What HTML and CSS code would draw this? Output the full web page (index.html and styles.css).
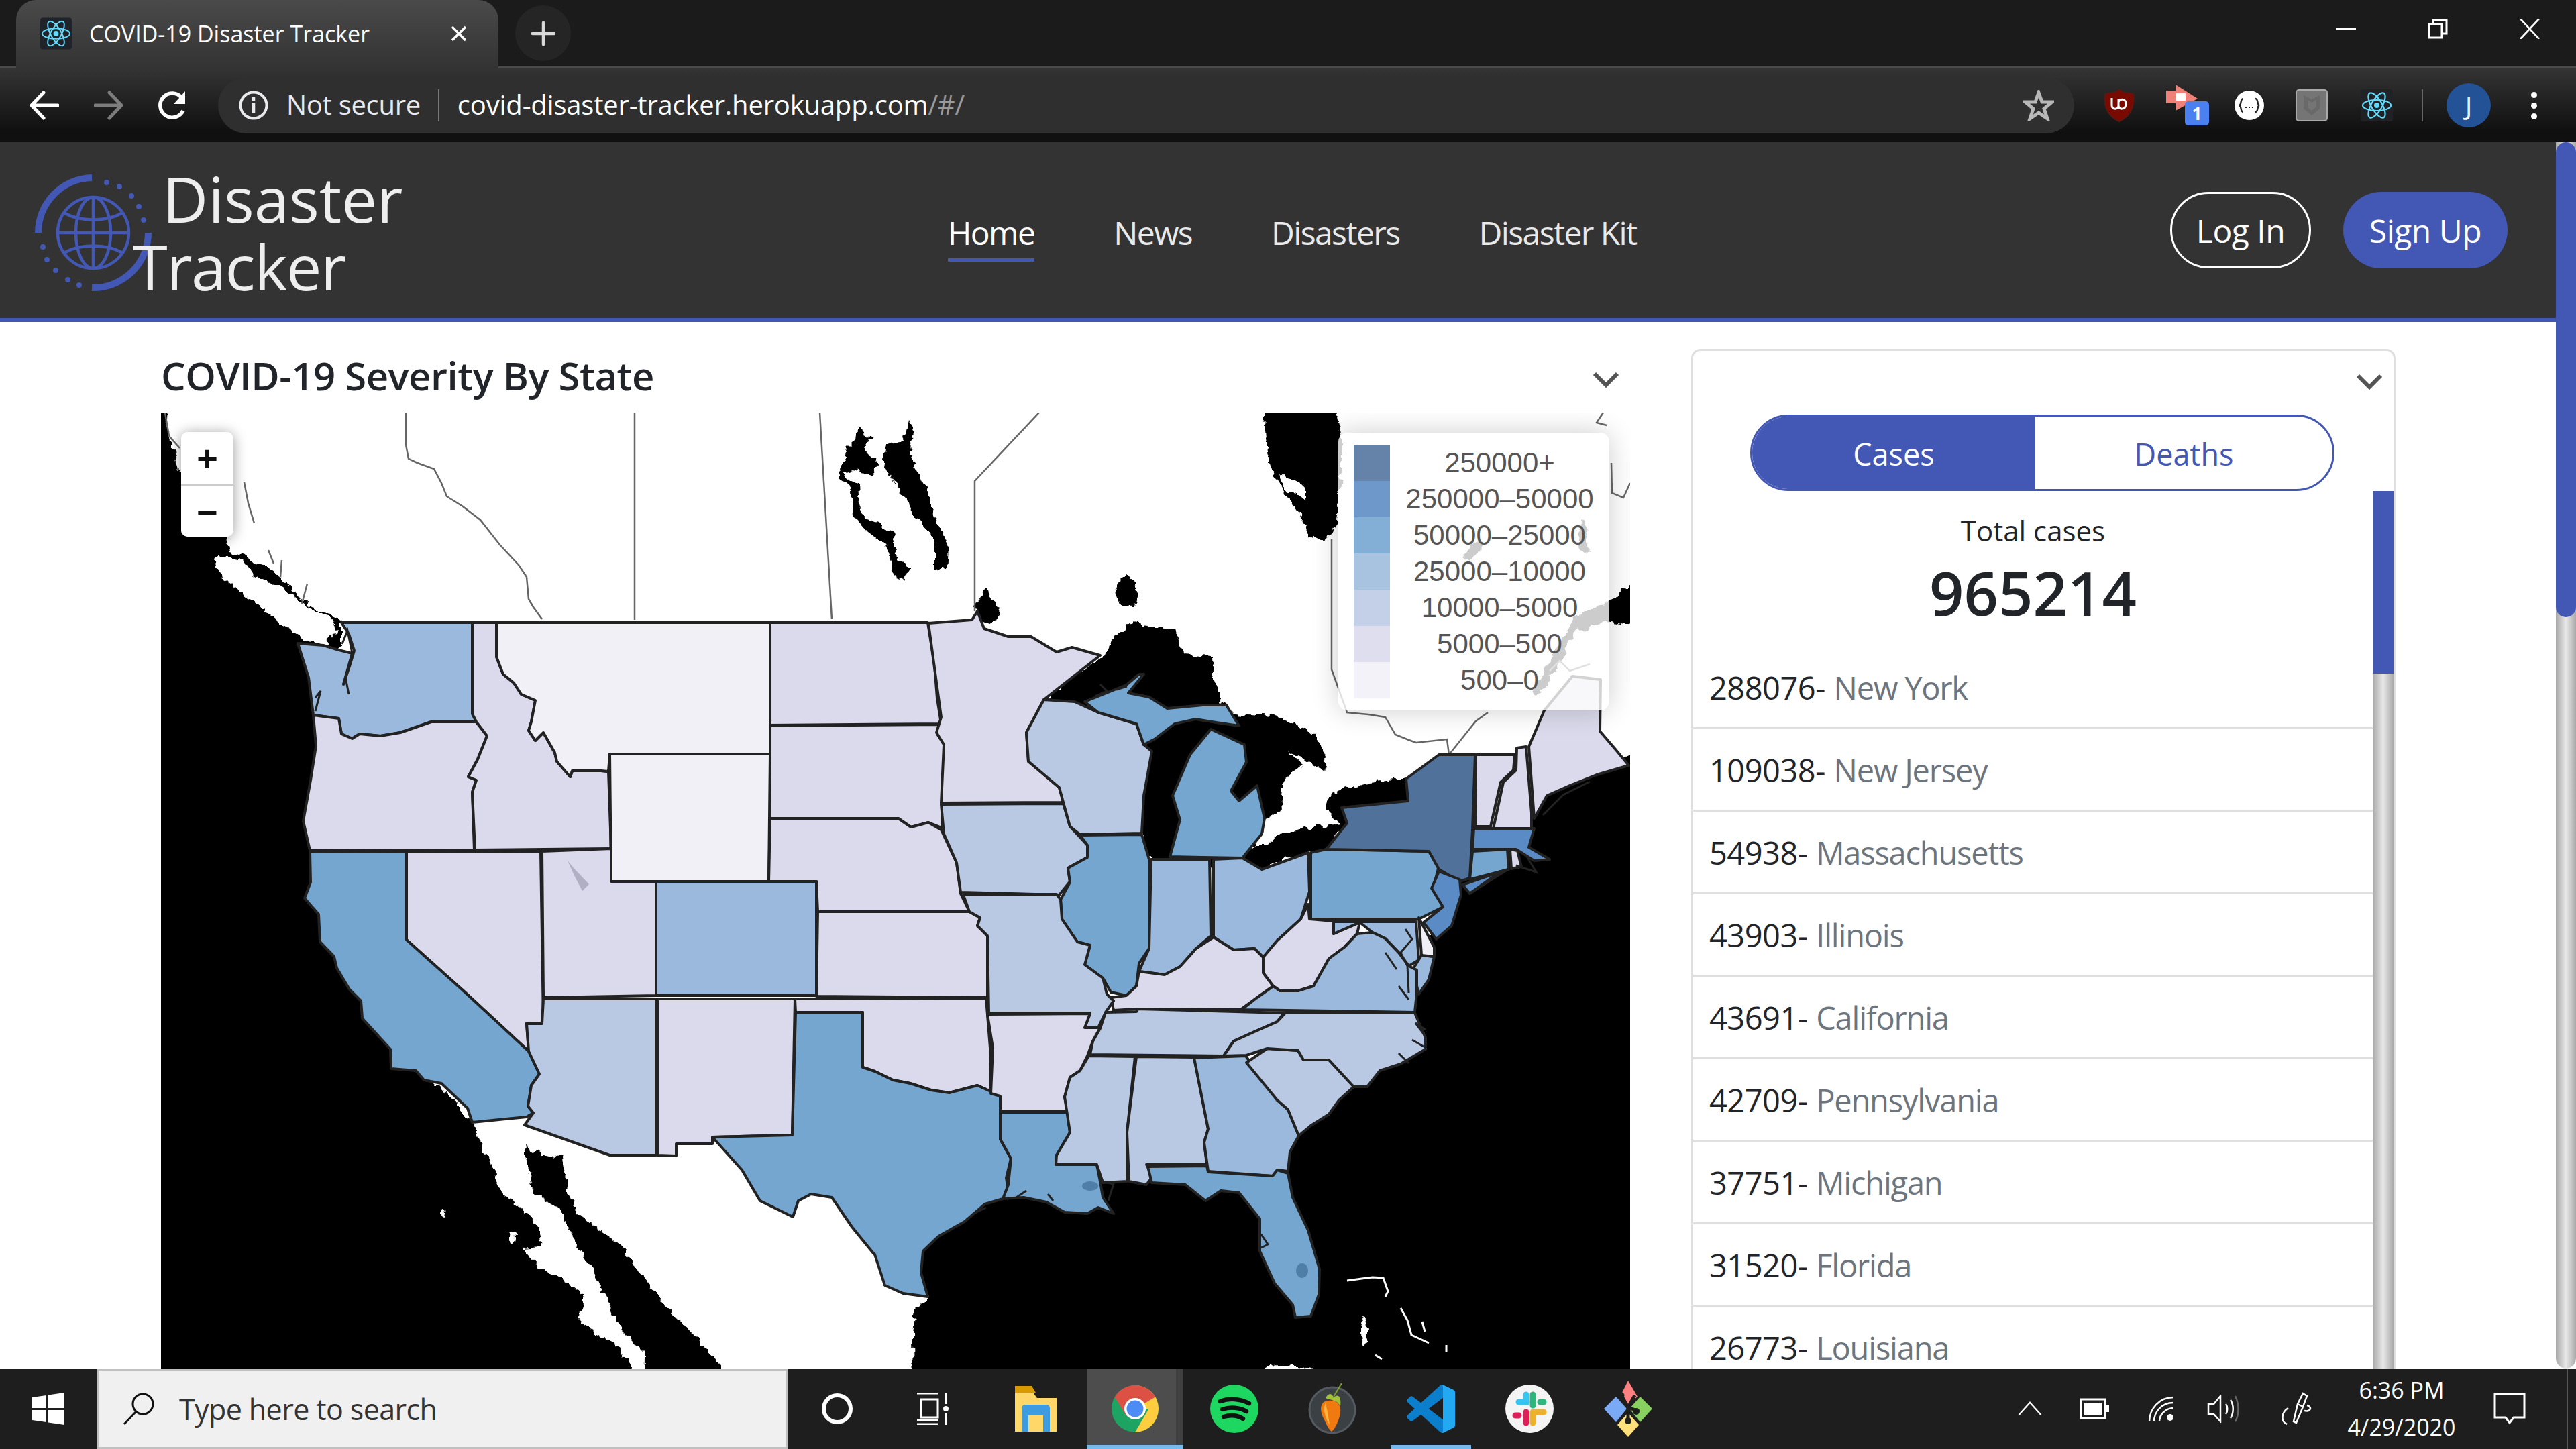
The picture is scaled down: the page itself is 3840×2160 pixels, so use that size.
FILE: index.html
```html
<!DOCTYPE html>
<html lang="en">
<head>
    <meta charset="UTF-8">
    <meta name="viewport" content="width=device-width, initial-scale=1.0">
    <title>COVID-19 Disaster Tracker</title>
    <link rel="stylesheet" href="styles.css">
</head>
<body>

    <!-- Browser tab strip -->
    <div class="tabstrip">
        <div class="tab">
            <svg class="favicon" viewBox="0 0 48 48"><rect width="48" height="48" rx="4" fill="#20232a"/><g fill="none" stroke="#61dafb" stroke-width="2"><ellipse cx="24" cy="24" rx="21" ry="8"/><ellipse cx="24" cy="24" rx="21" ry="8" transform="rotate(60 24 24)"/><ellipse cx="24" cy="24" rx="21" ry="8" transform="rotate(120 24 24)"/></g><circle cx="24" cy="24" r="4" fill="#61dafb"/></svg>
            <span class="tab-title">COVID-19 Disaster Tracker</span>
            <svg class="tab-close" viewBox="0 0 26 26"><path d="M3 3 23 23M23 3 3 23" stroke="#fff" stroke-width="3.4"/></svg>
        </div>
        <div class="new-tab"><svg viewBox="0 0 36 36"><path d="M18 2V34M2 18H34" stroke="#d8d8d8" stroke-width="4.5" stroke-linecap="round"/></svg></div>
        <div class="window-controls">
            <svg viewBox="0 0 30 30"><path d="M0 15H30" stroke="#fff" stroke-width="3"/></svg>
            <svg viewBox="0 0 30 30"><path d="M2 8H21V28H2ZM8 8V2H28V22H21" fill="none" stroke="#fff" stroke-width="3"/></svg>
            <svg viewBox="0 0 30 30"><path d="M1 0 29 30M29 0 1 30" stroke="#fff" stroke-width="2.6"/></svg>
        </div>
    </div>

    <!-- Browser toolbar -->
    <div class="toolbar">
        <svg class="tool-btn" viewBox="0 0 44 44"><path d="M42 22H5M21 3 3 22 21 41" fill="none" stroke="#fff" stroke-width="5" stroke-linecap="round" stroke-linejoin="round"/></svg>
        <svg class="tool-btn forward" viewBox="0 0 44 44"><path d="M2 22H39M23 3 41 22 23 41" fill="none" stroke="#7c7c7c" stroke-width="5" stroke-linecap="round" stroke-linejoin="round"/></svg>
        <svg class="tool-btn reload" viewBox="0 0 44 44"><path d="M38 30A18 18 0 1 1 36 11" fill="none" stroke="#fff" stroke-width="5.5"/><path d="M41 1V20H24Z" fill="#fff"/></svg>
        <div class="omnibox">
            <svg class="info-icon" viewBox="0 0 44 44"><circle cx="22" cy="22" r="19.5" fill="none" stroke="#e8eaed" stroke-width="4"/><path d="M22 19V33M22 10V15" stroke="#e8eaed" stroke-width="4.5"/></svg>
            <span class="not-secure">Not secure</span>
            <span class="omni-divider"></span>
            <span class="url">covid-disaster-tracker.herokuapp.com<span class="url-path">/#/</span></span>
            <svg class="star" viewBox="0 0 46 46"><path d="M23 4 28 18 43 18 31 28 36 43 23 34 10 43 15 28 3 18 18 18Z" fill="none" stroke="#b8b8b8" stroke-width="5"/></svg>
        </div>
        <div class="extensions">
            <svg class="ext ublock" viewBox="0 0 46 50"><path d="M23 1 27 5 44 8C46 28 40 41 23 49 6 41 0 28 2 8L19 5Z" fill="#7a0a00" stroke="#5d1710" stroke-width="2"/><path d="M12 14V25C12 32 22 32 22 25V16M22 25C22 32 32 32 33 24 34 15 24 14 22 20" fill="none" stroke="#fff" stroke-width="3"/></svg>
            <div class="ext video-ext">
                <svg viewBox="0 0 50 40"><path d="M15 1 48 22 15 40V29H1V10H15Z" fill="#ee8278"/><path d="M16 14H30V25H16Z" fill="#fff"/></svg>
                <span class="ext-badge">1</span>
            </div>
            <svg class="ext json-ext" viewBox="0 0 46 46"><circle cx="23" cy="23" r="22.5" fill="#fff" stroke="#111" stroke-width="1"/><path d="M14 13C9 13 12 22 8 23 12 24 9 33 14 33M32 13C37 13 34 22 38 23 34 24 37 33 32 33" fill="none" stroke="#222" stroke-width="2.4"/><path d="M17 26H19M22 26H24M27 26H29" stroke="#222" stroke-width="2"/></svg>
            <svg class="ext mcafee" viewBox="0 0 48 48"><rect x="1" y="1" width="46" height="46" rx="4" fill="#757575" stroke="#a9a9a9" stroke-width="2"/><path d="M12 9 24 15 36 9V29L24 39 12 29Z" fill="#696969"/><path d="M18 16 24 20 30 16V27L24 32 18 27Z" fill="#757575"/></svg>
            <svg class="ext react-ext" viewBox="0 0 48 48"><rect width="48" height="48" rx="4" fill="#202226"/><g fill="none" stroke="#61dafb" stroke-width="2.2"><ellipse cx="24" cy="24" rx="21" ry="8"/><ellipse cx="24" cy="24" rx="21" ry="8" transform="rotate(60 24 24)"/><ellipse cx="24" cy="24" rx="21" ry="8" transform="rotate(120 24 24)"/></g><circle cx="24" cy="24" r="4" fill="#61dafb"/></svg>
            <span class="tool-divider"></span>
            <div class="avatar">J</div>
            <div class="kebab"><i></i><i></i><i></i></div>
        </div>
    </div>

    <div class="viewport">
        <div class="page">

            <!-- Site header -->
            <header class="site-header">
                <div class="logo">
                    <svg class="logo-globe" viewBox="0 0 220 220">
                        <g fill="none" stroke="#4358b4">
                            <path d="M108 28A82 82 0 0 0 28 110" stroke-width="10"/>
                            <path d="M108 192A82 82 0 0 0 192 110" stroke-width="10"/>
                            <path d="M130 35 130 35M149 41 149 41M167 55 167 55M178 71 178 71M185 91 185 91M35 131 35 131M41 150 41 150M54 166 54 166M72 180 72 180M89 188 89 188" stroke-width="8" stroke-linecap="round"/>
                            <g stroke-width="4.5">
                                <circle cx="110" cy="110" r="53"/>
                                <ellipse cx="110" cy="110" rx="26" ry="53"/>
                                <path d="M110 57V163M57 110H163M66 80C90 94 130 94 154 80M66 140C90 126 130 126 154 140"/>
                            </g>
                        </g>
                    </svg>
                    <span class="logo-line logo-first">Disaster</span>
                    <span class="logo-line logo-second">Tracker</span>
                </div>
                <nav class="site-nav">
                    <a class="nav-link active">Home</a>
                    <a class="nav-link">News</a>
                    <a class="nav-link">Disasters</a>
                    <a class="nav-link">Disaster Kit</a>
                </nav>
                <div class="auth">
                    <a class="btn-outline">Log In</a>
                    <a class="btn-solid">Sign Up</a>
                </div>
            </header>

            <div class="content">
                <!-- Map column -->
                <section class="map-col">
                    <div class="map-head">
                        <h2>COVID-19 Severity By State</h2>
                        <svg class="chevron" viewBox="0 0 40 24"><path d="M3 3 20 20 37 3" fill="none" stroke="#555" stroke-width="6"/></svg>
                    </div>
                    <div class="map-wrap">
                        <svg class="map" viewBox="240 615 2190 1425">
                            <defs>
                                <filter id="rough" x="-5%" y="-5%" width="110%" height="110%" color-interpolation-filters="sRGB">
                                    <feTurbulence type="fractalNoise" baseFrequency=".07" numOctaves="3" seed="4" result="noise"/>
                                    <feDisplacementMap in="SourceGraphic" in2="noise" scale="14" xChannelSelector="R" yChannelSelector="G"/>
                                </filter>
                            </defs>
                            <!-- oceans and lakes -->
                            <g class="water" filter="url(#rough)">
                                <path d="M200 580H250L246 640 256 660 268 700 300 745 338 800 343 822 362 828 383 838 400 848 414 858 428 870 444 888 462 902 482 912 509 924V960L480 1270 510 1400 600 1560 704 1673 716 1700 727 1722 738 1752 750 1780 766 1792 786 1810 804 1829 808 1858 777 1860 800 1885 827 1901 850 1915 869 1930 865 1974 895 1990 918 2003 930 2022 941 2040 945 2080H200Z"/>
                                <path d="M781 1707 795 1715 838 1727 846 1770 861 1809 890 1830 926 1858 945 1885 968 1916 985 1940 1010 1964 1040 1995 1074 2040 1090 2080H960L961 2018 922 1979 905 1940 888 1901 870 1870 850 1838 827 1795 792 1775Z"/>
                                <path d="M1362 2080 1361 1989 1365 1952 1384 1933 1360 1880 1390 1820 1470 1770H1600L1650 1750 1700 1745 1850 1755 1900 1720 1960 1650 2040 1580 2090 1500 2120 1440 2135 1390 2150 1340 2180 1300 2240 1250 2280 1215 2306 1186 2340 1165 2380 1140 2470 1110V2080Z"/>
                                <path d="M1560 1041 1600 1010 1648 977 1655 960 1660 947 1675 940 1690 926 1720 935 1751 937 1758 960 1767 977 1805 980 1806 1000 1809 1013 1824 1049 1832 1062 1860 1065 1897 1067 1920 1075 1935 1079 1950 1090 1958 1097 1970 1115 1977 1130 1973 1148 1940 1128 1920 1120 1943 1141 1925 1150 1912 1161 1910 1185 1912 1207 1885 1222 1881 1243 1852 1279 1881 1296 1912 1280 1950 1271 1977 1266 2008 1227 1965 1232 1912 1240 1889 1258 1862 1258 1855 1278 1800 1290 1721 1283 1702 1263 1702 1186 1698 1148 1700 1100Z"/>
                                <path d="M1977 1207 1985 1184 2010 1175 2034 1169 2099 1161 2120 1200 2000 1230Z"/>
                                <path d="M1278 635 1290 645 1300 650 1290 668 1310 695 1300 706 1270 700 1258 704 1262 716 1280 722 1282 750 1288 772 1310 780 1330 796 1336 826 1358 848 1348 864 1335 860 1328 835 1318 808 1292 792 1272 770 1270 730 1252 718 1250 700 1262 680 1260 670 1275 655Z"/>
                                <path d="M1320 663 1354 658 1366 700 1386 740 1400 786 1414 816 1412 852 1393 847 1393 801 1363 765 1333 720 1316 694Z"/>
                                <path d="M1354 627 1362 640 1366 648 1354 662 1345 662 1350 640Z"/>
                                <path d="M1679 858 1692 866 1696 878 1690 903 1670 902 1661 880 1668 866Z"/>
                                <path d="M1472 875 1478 895 1491 906 1484 925 1472 931 1460 925 1453 903Z"/>
                                <path d="M1889 580H1985L2000 651 2000 700 1992 778 1977 809 1954 799 1945 780 1927 753 1910 725 1897 707 1885 636Z"/>
                                <path d="M2470 840V940L2402 926 2348 942 2325 988 2294 1035 2285 1030 2302 1003 2325 957 2348 919 2399 896Z"/>
                                <path d="M2180 830 2195 812 2210 805 2205 822 2190 835Z"/>
                                <path d="M2352 790 2362 772 2368 785 2364 805 2370 825 2356 822Z"/>
                            </g>
                            <g fill="#fff" filter="url(#rough)">
                                <path d="M318 831 329 829 356 834 379 857 421 877 459 903 494 923 505 939 486 961 459 956 421 933 375 893 337 865 322 842Z"/>
                                <path d="M1904 705 1925 715 1945 724 1945 744 1915 730Z"/>
                                <ellipse cx="662" cy="1809" rx="3" ry="8"/>
                                <ellipse cx="766" cy="1845" rx="4" ry="10"/>
                                <path d="M826 1795 836 1805 845 1830 838 1825Z"/>
                                <ellipse cx="2034" cy="1985" rx="5" ry="21"/>
                                <path d="M1881 2044C1900 2030 1940 2032 1965 2044Z"/>
                            </g>
                            <!-- Bahamas flecks -->
                            <path class="flecks" d="M2008 1909 2030 1906 2046 1904 2062 1905 2069 1925 2065 1933M2088 1950 2098 1968 2104 1990 2130 2002M2120 1970 2124 1985M2156 2005V2015M2050 2020 2060 2026"/>
                            <!-- Canadian borders -->
                            <g class="province">
                                <path d="M605 615V663L609 684 622 690 647 699 658 720 666 740 690 755 716 775 745 812 773 842 785 860 788 893 795 905 808 923"/>
                                <path d="M946 615V924"/>
                                <path d="M1222 615 1240 923"/>
                                <path d="M1549 615 1453 717V911"/>
                                <path d="M1985 804V998L2008 1062 2040 1065 2065 1069 2080 1095 2100 1103 2111 1107 2157 1102 2160 1125 2200 1075 2218 1062"/>
                                <path d="M2390 615 2380 630 2395 634M2402 690 2403 735 2420 742 2430 720M2310 1000 2325 985 2340 1000 2370 990"/>
                                <path d="M364 719 370 750 379 780M340 760 345 790M400 820 408 840M420 835 418 860M458 870 450 900"/>
                                <path d="M246 615 252 650 268 668"/>
                            </g>
                            <!-- States -->
                            <g class="states">
                                <path class="s4" d="M509 928H704L706 1064 710 1076H643L597 1092 567 1097 536 1094 525 1101 509 1094 505 1071 467 1066 460 1010 444 959 482 962 505 969 525 974 512 1020 522 990 528 970 520 945Z"/>
                                <path class="s2" d="M467 1066 505 1071 509 1094 525 1101 536 1094 567 1097 597 1092 643 1076H710L726 1097 712 1132 698 1158 710 1163 704 1181 707 1267 462 1268 452 1224 463 1163 471 1112Z"/>
                                <path class="s2" d="M704 928H740V979L750 1005 766 1018 777 1035 798 1044 792 1076 788 1089 798 1104 810 1092 827 1122 830 1135 850 1158 853 1149 896 1149 907 1150 911 1265 708 1267 704 1181 710 1163 698 1158 712 1132 726 1097 710 1076 704 1064Z"/>
                                <path class="s1" d="M740 928H1148V1124H909L907 1150 896 1149 853 1149 850 1158 830 1135 827 1122 810 1092 798 1104 788 1089 792 1076 798 1044 777 1035 766 1018 750 1005 740 979Z"/>
                                <path class="s1" d="M909 1124H1148L1146 1314H911Z"/>
                                <path class="s2" d="M1148 928H1383L1393 990 1397 1041 1403 1079 1148 1081Z"/>
                                <path class="s2" d="M1148 1082 1403 1080 1397 1094 1408 1109V1196L1404 1215 1404 1234 1384 1226 1358 1233 1339 1220H1148Z"/>
                                <path class="s2" d="M1148 1220H1339L1358 1233 1384 1226 1403 1237 1426 1286 1432 1332 1445 1359H1219L1217 1314H1146Z"/>
                                <path class="s2" d="M1219 1359H1445L1461 1368 1457 1380 1472 1395V1487L1217 1485Z"/>
                                <path class="s4" d="M978 1314H1217V1484H978Z"/>
                                <path class="s2" d="M808 1269 911 1265V1314H978V1484L810 1487Z"/>
                                <path class="s2" d="M606 1270 806 1269 810 1525H785L788 1567 693 1479 606 1401Z"/>
                                <path class="s5" d="M462 1270H606V1401L693 1479 788 1567 804 1601 792 1618 787 1649 795 1659 785 1665 704 1673 697 1652 658 1615 632 1610 620 1596 583 1593 582 1564 540 1518 538 1492 521 1475 502 1443 498 1426 477 1404 475 1363 454 1339 463 1315Z"/>
                                <path class="s3" d="M810 1489H978V1722H909L782 1677 795 1659 787 1649 792 1618 804 1601 788 1567 785 1526H808Z"/>
                                <path class="s2" d="M980 1489H1185L1181 1692 1062 1695V1705H1008V1723L980 1722Z"/>
                                <path class="s2" d="M1185 1489 1470 1488 1476 1562 1477 1627 1457 1618 1415 1629 1388 1625 1357 1615 1331 1610 1304 1597 1286 1591V1509H1186Z"/>
                                <path class="s5" d="M1186 1509H1286V1591L1304 1597 1331 1610 1357 1615 1388 1625 1415 1629 1457 1618 1477 1627 1491 1634V1698L1507 1727 1500 1756 1503 1775 1495 1787 1468 1795 1438 1821 1399 1843 1376 1865 1373 1897 1383 1933 1346 1928 1319 1916 1304 1870 1301 1867 1270 1829 1240 1785 1209 1780 1190 1790 1182 1814 1133 1790 1106 1744 1062 1695 1181 1692Z"/>
                                <path class="s2" d="M1384 929 1449 924 1457 911 1467 937 1503 949 1537 949 1575 972 1598 965 1640 977 1556 1043 1530 1092 1533 1135 1579 1174 1585 1196 1403 1197 1407 1110 1396 1092 1403 1069 1392 988Z"/>
                                <path class="s3" d="M1403 1199 1585 1198 1595 1232 1621 1260V1278L1592 1294 1595 1314 1579 1334 1432 1330 1426 1286 1407 1243Z"/>
                                <path class="s3" d="M1556 1043 1602 1046 1637 1062 1694 1079 1705 1110 1717 1120 1705 1186 1702 1242 1610 1244 1595 1232 1585 1196 1579 1174 1533 1135 1530 1092Z"/>
                                <path class="s5" d="M1617 1046 1679 1021 1698 1005H1705L1682 1033 1713 1039 1740 1056 1793 1051 1828 1051 1847 1082 1813 1077 1782 1072 1751 1079 1721 1102 1705 1110 1694 1079 1637 1062Z"/>
                                <path class="s5" d="M1805 1087 1855 1110 1858 1136 1835 1179 1847 1194 1874 1171 1885 1220 1881 1243 1852 1279 1744 1277 1759 1222 1748 1186 1774 1125Z"/>
                                <path class="s5" d="M1610 1245 1702 1244 1713 1281V1414L1698 1436 1694 1470 1679 1484 1656 1479 1644 1458 1617 1438 1625 1409 1606 1404 1583 1370 1581 1341 1595 1315 1592 1294 1621 1278V1260Z"/>
                                <path class="s4" d="M1716 1281H1803L1805 1395 1783 1414 1759 1441 1736 1453 1698 1448 1713 1414Z"/>
                                <path class="s4" d="M1809 1281 1852 1279 1881 1296 1950 1271 1952 1329 1939 1370 1904 1402 1883 1427 1870 1414 1839 1416 1809 1397Z"/>
                                <path class="s5" d="M1954 1271 1977 1266 2130 1269 2145 1291 2140 1310 2151 1352 2115 1370H1954Z"/>
                                <path class="s7" d="M1977 1266 2008 1227 2000 1204 2099 1194 2096 1161 2145 1125H2199L2195 1237 2191 1309 2176 1314 2145 1296 2130 1269Z"/>
                                <path class="s6" d="M2145 1299 2176 1311 2178 1334 2164 1380 2141 1400 2122 1375 2151 1352 2134 1324Z"/>
                                <path class="s2" d="M2200 1125H2258L2256 1148 2237 1166 2222 1232H2199Z"/>
                                <path class="s2" d="M2261 1115 2275 1113 2283 1212V1235H2226L2241 1166 2260 1148Z"/>
                                <path class="s2" d="M2279 1113 2302 1059 2344 1008 2386 1013 2385 1090 2409 1118 2428 1141 2380 1155 2340 1171 2306 1186 2287 1220Z"/>
                                <path class="s6" d="M2197 1235H2287L2279 1263 2310 1281 2287 1283 2260 1266H2195Z"/>
                                <path class="s5" d="M2195 1269 2247 1266 2249 1296 2191 1311Z"/>
                                <path class="s2" d="M2251 1266 2262 1268 2268 1292 2253 1295Z"/>
                                <path class="s6" d="M2180 1319 2237 1299 2191 1332Z"/>
                                <path class="s2" d="M1660 1506 1694 1504 1849 1505 1874 1487 1898 1470 1883 1450V1427L1870 1414 1839 1416 1809 1397 1783 1414 1759 1441 1736 1453 1698 1448 1694 1470 1679 1484 1656 1487Z"/>
                                <path class="s2" d="M1950 1348 1952 1370 1988 1373V1392L2027 1375 2023 1392 2004 1412 1981 1429 1958 1470 1935 1477 1908 1477 1898 1470 1883 1450V1427L1904 1402 1939 1370Z"/>
                                <path class="s4" d="M1988 1374H2111L2115 1431 2100 1440 2085 1420 2065 1399 2046 1390 2027 1375 1988 1392Z"/>
                                <path class="s4" d="M2119 1424 2138 1426 2130 1460 2115 1482 2106 1445Z"/>
                                <path class="s1" d="M2115 1368 2138 1412V1426L2119 1424Z"/>
                                <path class="s4" d="M2109 1509 1851 1505 1874 1487 1898 1470 1908 1477 1935 1477 1958 1470 1981 1429 2004 1412 2023 1392 2046 1390 2065 1399 2085 1420 2100 1440 2112 1446V1480Z"/>
                                <path class="s3" d="M1648 1509 1694 1508 1696 1504 1914 1510 1904 1523 1870 1538 1839 1552 1824 1574 1625 1572 1629 1552 1640 1533Z"/>
                                <path class="s3" d="M1436 1334 1575 1333 1581 1341 1583 1370 1606 1404 1625 1409 1617 1438 1644 1458 1650 1482 1660 1492 1648 1509 1637 1532H1617L1625 1510H1474L1472 1395 1457 1380 1461 1368 1445 1359Z"/>
                                <path class="s2" d="M1472 1512 1625 1511 1617 1532H1640L1629 1552 1621 1574 1610 1596 1595 1606 1587 1635 1591 1656H1491V1634L1477 1630 1480 1562Z"/>
                                <path class="s5" d="M1491 1658H1591L1595 1688 1575 1722 1574 1736H1635L1640 1761 1644 1785 1660 1809 1637 1800 1621 1809 1587 1807 1560 1792 1526 1785 1495 1787 1503 1766 1507 1727 1491 1698Z"/>
                                <path class="s3" d="M1623 1574 1692 1575 1680 1688V1761L1644 1763 1635 1736H1574L1575 1722 1595 1688 1587 1635 1595 1606 1610 1596Z"/>
                                <path class="s3" d="M1694 1575 1780 1576 1801 1683 1795 1703 1799 1736H1709L1719 1753 1709 1766 1683 1761 1680 1688Z"/>
                                <path class="s4" d="M1780 1577 1857 1574 1904 1640 1920 1654 1936 1693 1923 1717 1920 1746 1904 1744 1897 1753 1801 1746 1795 1703 1801 1683Z"/>
                                <path class="s3" d="M1858 1584 1889 1563 1935 1566 1943 1580H1981L2018 1620 1996 1640 1981 1661 1954 1678 1936 1693 1920 1654 1904 1640Z"/>
                                <path class="s3" d="M1916 1510H2109L2125 1547V1564L2088 1586 2057 1596 2038 1620H2018L1981 1580H1943L1935 1566 1889 1563 1858 1573 1824 1574 1839 1552 1870 1538 1904 1523Z"/>
                                <path class="s5" d="M1711 1739 1799 1738 1801 1747 1897 1753 1904 1744 1920 1749 1927 1785 1950 1834 1967 1892 1966 1930 1954 1962 1931 1964 1927 1945 1900 1913 1878 1865V1817L1847 1778 1820 1775 1797 1790 1767 1766 1717 1763Z"/>
                            </g>
                            <!-- lakes inside states -->
                            <g>
                                <path d="M846 1283 856 1295 878 1318 868 1328 856 1305Z" fill="#b0afc3"/>
                                <ellipse cx="1941" cy="1894" rx="9" ry="11" fill="#4f7fa6"/>
                                <ellipse cx="1625" cy="1768" rx="12" ry="7" fill="#4f7fa6"/>
                            </g>
                            <!-- jagged coast lines -->
                            <g class="coast">
                                <path d="M512 1020 525 974 518 940 510 960M470 1040 478 1030 470 1060M520 1035 515 1010"/>
                                <path d="M2100 1480 2098 1440 2088 1420 2105 1400 2095 1385M2125 1535 2110 1525 2125 1545M2105 1550 2122 1560M2085 1570 2100 1585M2085 1470 2100 1490M2065 1420 2082 1445"/>
                                <path d="M1880 1860 1890 1855 1880 1840M1640 1761 1660 1765 1652 1790M1450 1810 1470 1800M1515 1785 1530 1775M1570 1790 1562 1780"/>
                                <path d="M2180 1319 2237 1299 2250 1295 2191 1332ZM2260 1290 2290 1300 2275 1275M2300 1215 2330 1185 2370 1165"/>
                                <path d="M1640 1020 1650 1030 1632 1038M1680 1023 1664 1028"/>
                            </g>
                        </svg>
                        <div class="zoom-ctl">
                            <button class="zoom-btn">+</button>
                            <button class="zoom-btn">&minus;</button>
                        </div>
                        <div class="legend">
                            <div class="legend-row"><i class="c7"></i><span>250000+</span></div>
                            <div class="legend-row"><i class="c6"></i><span>250000&ndash;50000</span></div>
                            <div class="legend-row"><i class="c5"></i><span>50000&ndash;25000</span></div>
                            <div class="legend-row"><i class="c4"></i><span>25000&ndash;10000</span></div>
                            <div class="legend-row"><i class="c3"></i><span>10000&ndash;5000</span></div>
                            <div class="legend-row"><i class="c2"></i><span>5000&ndash;500</span></div>
                            <div class="legend-row"><i class="c1"></i><span>500&ndash;0</span></div>
                        </div>
                    </div>
                </section>

                <!-- Stats panel -->
                <aside class="stats">
                    <svg class="chevron stats-chevron" viewBox="0 0 40 24"><path d="M3 3 20 20 37 3" fill="none" stroke="#555" stroke-width="6"/></svg>
                    <div class="toggle">
                        <span class="toggle-opt on">Cases</span>
                        <span class="toggle-opt">Deaths</span>
                    </div>
                    <div class="stats-body">
                        <div class="total">
                            <div class="total-label">Total cases</div>
                            <div class="total-num">965214</div>
                        </div>
                        <ul class="state-list">
                            <li><b>288076</b>- <span>New York</span></li>
                            <li><b>109038</b>- <span>New Jersey</span></li>
                            <li><b>54938</b>- <span>Massachusetts</span></li>
                            <li><b>43903</b>- <span>Illinois</span></li>
                            <li><b>43691</b>- <span>California</span></li>
                            <li><b>42709</b>- <span>Pennsylvania</span></li>
                            <li><b>37751</b>- <span>Michigan</span></li>
                            <li><b>31520</b>- <span>Florida</span></li>
                            <li><b>26773</b>- <span>Louisiana</span></li>
                        </ul>
                        <div class="stats-scroll"><div class="stats-thumb"></div></div>
                    </div>
                </aside>
            </div>
        </div>
        <div class="page-scroll"><div class="page-thumb"></div></div>
    </div>

    <!-- Windows taskbar -->
    <div class="taskbar">
        <div class="start"><svg viewBox="0 0 48 48"><path d="M0 7 21 4V23H0ZM24 3.5 48 0V23H24ZM0 26H21V44L0 41ZM24 26H48V48L24 44.5Z" fill="#fff"/></svg></div>
        <div class="search">
            <svg class="search-icon" viewBox="0 0 48 48"><circle cx="30" cy="17" r="15" fill="none" stroke="#111" stroke-width="3"/><path d="M20 28 2 47" stroke="#111" stroke-width="3"/></svg>
            <span>Type here to search</span>
        </div>
        <div class="tb-item cortana"><svg viewBox="0 0 48 48"><circle cx="24" cy="24" r="20" fill="none" stroke="#fff" stroke-width="6"/></svg></div>
        <div class="tb-item taskview"><svg viewBox="0 0 48 48"><path d="M0 1H31M0 47H31M6 10H31V37H6ZM0 41H31" fill="none" stroke="#fff" stroke-width="3"/><path d="M43 0V17M43 30V48" stroke="#fff" stroke-width="3"/><circle cx="43" cy="24" r="4" fill="#fff"/></svg></div>
        <div class="tb-item explorer"><svg viewBox="0 0 64 72"><path d="M1 12V2H26L32 12Z" fill="#d99a00"/><path d="M1 12H28L34 20H63V70H1Z" fill="#ffd768"/><path d="M11 70V36C11 32 13 30 17 30H47C51 30 53 32 53 36V70H43V46H21V70Z" fill="#3d9be0"/></svg></div>
        <div class="tb-item chrome active">
            <svg viewBox="0 0 72 72"><circle cx="36" cy="36" r="35" fill="#1da462"/><path d="M36 1A35 35 0 0 1 71 36H36Z" fill="#ffcd40"/><path d="M36 1A35 35 0 0 0 5.7 18.5L23 47 36 36 66.3 18.5A35 35 0 0 0 36 1Z" fill="#dd5144"/><path d="M71 36A35 35 0 0 1 36 71L53 42 66 19Z" fill="#ffcd40"/><circle cx="36" cy="36" r="16" fill="#fff"/><circle cx="36" cy="36" r="12.5" fill="#4e8cf5"/></svg>
        </div>
        <div class="tb-item spotify"><svg viewBox="0 0 72 72"><circle cx="36" cy="36" r="36" fill="#1ed760"/><path d="M15 25C28 20 45 21 58 28M18 37C30 33 44 34 54 40M20 48C30 45 41 46 49 51" fill="none" stroke="#111" stroke-width="6.5" stroke-linecap="round"/></svg></div>
        <div class="tb-item fl"><svg viewBox="0 0 72 76"><circle cx="36" cy="40" r="34" fill="#3b4045" stroke="#555a60" stroke-width="3"/><path d="M30 26C18 26 16 40 24 54 28 64 32 70 35 72 40 68 46 56 48 44 50 32 42 24 30 26Z" fill="#f07a10"/><path d="M26 30C22 36 24 50 32 62 30 48 28 38 26 30Z" fill="#ffb640"/><path d="M26 22C30 14 36 14 38 22 44 14 50 20 48 34 44 28 40 26 38 26 34 24 30 24 26 22Z" fill="#a5c33a"/><path d="M38 20 50 0" stroke="#7ea12a" stroke-width="2" fill="none"/></svg></div>
        <div class="tb-item vscode active"><svg viewBox="0 0 100 100"><path d="M96.46 10.8 75.86.87a6.23 6.23 0 0 0-7.1 1.2L29.5 37.9 12.4 24.9a4.16 4.16 0 0 0-5.3.2L1.6 30.1a4.17 4.17 0 0 0 0 6.2L16.4 50 1.6 63.7a4.17 4.17 0 0 0 0 6.2l5.5 5a4.16 4.16 0 0 0 5.3.2l17.1-13L68.8 98a6.2 6.2 0 0 0 7.1 1.2l20.6-9.9a6.2 6.2 0 0 0 3.5-5.6V16.4a6.2 6.2 0 0 0-3.5-5.6zM75 72.7 45.2 50 75 27.3z" fill="#0b7fcc"/><path d="M72 .5C73 0 75 .4 76 .9L96.5 10.8A6.2 6.2 0 0 1 100 16.4V83.7A6.2 6.2 0 0 1 96.5 89.3L76 99.2C74.5 99.9 73 100 72 99.5 74 99 75 98 75 95V5C75 3 74 1 72 .5Z" fill="#23a9f2"/></svg></div>
        <div class="tb-item slack"><svg viewBox="0 0 72 72"><circle cx="36" cy="36" r="36" fill="#f4f4f4"/><g fill="none" stroke-width="9" stroke-linecap="round"><path d="M31 15V26H20M32 26H20" stroke="#36c5f0"/><path d="M41 15V31M57 26H52" stroke="#2eb67d"/><path d="M41 57V41M57 41H45" stroke="#ecb22e"/><path d="M31 57V41M15 46H20" stroke="#e01e5a"/></g></svg></div>
        <div class="tb-item gitkraken"><svg viewBox="0 0 72 84"><path d="M36 0 50 24 36 36 24 24Z" fill="#ff8080"/><path d="M18 24 34 42 18 62 0 42Z" fill="#7aa9f5"/><path d="M54 24 72 42 54 62 38 42Z" fill="#88d060"/><path d="M36 48 52 66 36 84 20 66Z" fill="#ffe07a"/><path d="M26 22 36 40 46 22M36 40V60M36 40 52 46" fill="none" stroke="#1e1e1e" stroke-width="5"/><circle cx="26" cy="22" r="4.5" fill="#1e1e1e"/><circle cx="48" cy="46" r="5" fill="#1e1e1e"/><circle cx="36" cy="60" r="5" fill="#1e1e1e"/></svg></div>
        <div class="tray">
            <svg class="tray-caret" viewBox="0 0 40 24"><path d="M2 22 20 2 38 22" fill="none" stroke="#fff" stroke-width="2.5"/></svg>
            <svg class="tray-battery" viewBox="0 0 44 32"><path d="M2 2H38V30H2Z" fill="none" stroke="#fff" stroke-width="3"/><path d="M7 7H33V25H7ZM40 11H44V21H40Z" fill="#fff"/></svg>
            <svg class="tray-wifi" viewBox="0 0 38 38"><g fill="none" stroke="#fff" stroke-width="2.5"><path d="M2 38C2 20 16 2 38 2"/><path d="M9 38C9 24 20 10 38 10"/><path d="M17 38C17 28 26 18 38 18"/></g><circle cx="33" cy="32" r="5" fill="#fff"/></svg>
            <svg class="tray-volume" viewBox="0 0 48 42"><path d="M2 14H10L20 2V40L10 29H2Z" fill="none" stroke="#fff" stroke-width="2.5"/><path d="M28 14C31 18 31 25 28 29M35 8C40 16 40 27 35 35" fill="none" stroke="#fff" stroke-width="2.5"/><path d="M42 2C48 14 48 30 42 40" fill="none" stroke="#666" stroke-width="2.5"/></svg>
            <svg class="tray-pen" viewBox="0 0 50 50"><path d="M22 44 28 18 36 2 42 6 36 22 26 46ZM28 18 36 22" fill="none" stroke="#fff" stroke-width="2.5"/><path d="M14 24C4 30 2 44 12 48M42 20C50 22 48 30 38 28" fill="none" stroke="#fff" stroke-width="2.5"/></svg>
            <div class="clock"><div>6:36 PM</div><div>4/29/2020</div></div>
            <svg class="tray-notify" viewBox="0 0 48 48"><path d="M2 2H46V37H30L24 45 18 37H2Z" fill="none" stroke="#fff" stroke-width="3"/></svg>
            <span class="show-desktop"></span>
        </div>
    </div>

</body>
</html>
```

FILE: styles.css
```css
* { box-sizing: border-box; }
body {
    margin: 0;
    width: 3840px;
    height: 2160px;
    overflow: hidden;
    display: flex;
    flex-direction: column;
    font-family: "Open Sans", "Noto Sans", Arial, sans-serif;
    background: #fff;
}
svg { display: block; }

/* browser chrome */
.tabstrip {
    height: 102px;
    display: flex;
    background: #1b1b1b;
    border-bottom: 3px solid #4a4a4a;
    padding-left: 24px;
}
.tab {
    width: 719px;
    height: 102px;
    flex: none;
    position: relative;
    display: flex;
    align-items: center;
    padding: 0 36px 2px 36px;
    border-radius: 30px 30px 0 0;
    background: linear-gradient(#4a4a4a, #333);
}
.favicon { width: 47px; height: 48px; }
.tab-title { color: #fff; font-size: 34px; margin-left: 26px; white-space: nowrap; }
.tab-close { width: 26px; height: 26px; margin-left: auto; margin-right: 10px; }
.new-tab {
    width: 83px;
    height: 83px;
    margin: 8px 0 0 25px;
    border-radius: 50%;
    background: #252525;
    display: flex;
    align-items: center;
    justify-content: center;
}
.new-tab svg { width: 36px; height: 36px; }
.window-controls { margin-left: auto; display: flex; gap: 107px; padding: 28px 54px 0 0; }
.window-controls svg { width: 30px; height: 30px; }

.toolbar {
    height: 110px;
    flex: none;
    display: flex;
    align-items: center;
    padding-left: 44px;
    background: linear-gradient(#343434, #101010 85%);
}
.tool-btn { width: 44px; height: 44px; }
.forward { margin-left: 52px; }
.reload { margin-left: 51px; }
.omnibox {
    width: 2767px;
    height: 84px;
    margin-left: 46px;
    border-radius: 42px;
    background: #2f2f2f;
    display: flex;
    align-items: center;
    padding-left: 31px;
    color: #e8eaed;
    font-size: 40px;
}
.info-icon { width: 44px; height: 44px; }
.not-secure { margin: 0 0 3px 27px; letter-spacing: -0.3px; white-space: nowrap; }
.omni-divider { width: 2px; height: 48px; background: #777; margin: 0 27px 0 26px; }
.url { color: #fff; white-space: nowrap; letter-spacing: -0.2px; margin-bottom: 3px; }
.url-path { color: #9a9a9a; }
.star { width: 46px; height: 46px; margin-left: auto; margin-right: 30px; }
.extensions { display: flex; align-items: center; margin-left: 44px; position: relative; }
.ext { flex: none; }
.ublock { width: 46px; height: 50px; }
.video-ext { width: 66px; height: 64px; margin-left: 46px; position: relative; }
.video-ext svg { width: 50px; height: 40px; }
.ext-badge {
    position: absolute;
    left: 29px;
    top: 26px;
    width: 36px;
    height: 36px;
    border-radius: 5px;
    background: #4a80f0;
    color: #fff;
    font-size: 26px;
    font-weight: 700;
    text-align: center;
    line-height: 36px;
}
.json-ext { width: 46px; height: 46px; margin-left: 36px; }
.mcafee { width: 48px; height: 48px; margin-left: 46px; }
.react-ext { width: 48px; height: 48px; margin-left: 49px; }
.tool-divider { width: 2px; height: 48px; background: #666; margin-left: 43px; }
.avatar {
    width: 66px;
    height: 66px;
    margin-left: 35px;
    border-radius: 50%;
    background: #245297;
    color: #fff;
    font-size: 38px;
    text-align: center;
    line-height: 66px;
}
.kebab { margin-left: 60px; display: flex; flex-direction: column; gap: 7px; }
.kebab i { width: 9px; height: 9px; border-radius: 50%; background: #fff; }

/* page */
.viewport { flex: 1; display: flex; min-height: 0; }
.page { flex: 1; min-width: 0; display: flex; flex-direction: column; }
.page-scroll { width: 30px; background: linear-gradient(90deg, #a8a8a8, #e8e8e8 50%, #a8a8a8); border-radius: 0 0 15px 15px; }
.page-thumb { height: 708px; background: #4358b4; border-radius: 15px; }

.site-header {
    height: 268px;
    flex: none;
    display: flex;
    align-items: center;
    background: #333;
    border-bottom: 6px solid #4358b4;
}
.logo { width: 1413px; height: 100%; position: relative; color: #eee; font-size: 94px; line-height: 90px; }
.logo-globe { position: absolute; left: 29px; top: 25px; width: 220px; height: 220px; }
.logo-line { position: absolute; white-space: nowrap; }
.logo-first { left: 242px; top: 39px; }
.logo-second { left: 198px; top: 140px; letter-spacing: -1.6px; }
.site-nav { display: flex; gap: 118px; font-size: 48px; color: #e9e9e9; letter-spacing: -1.6px; padding-top: 4px; }
.nav-link { padding: 14px 0 6px; border-bottom: 5px solid transparent; white-space: nowrap; }
.nav-link.active { color: #fff; border-color: #4358b4; }
.auth { margin-left: auto; padding-right: 72px; display: flex; gap: 48px; font-size: 48px; color: #fff; letter-spacing: -0.5px; }
.btn-outline, .btn-solid {
    height: 114px;
    border-radius: 57px;
    display: flex;
    align-items: center;
    justify-content: center;
}
.btn-outline { width: 210px; border: 3px solid #fff; }
.btn-solid { width: 245px; background: #4358b4; }

.content { flex: 1; min-height: 0; display: flex; overflow: hidden; padding-left: 240px; }
.map-col { width: 2190px; flex: none; }
.map-head {
    height: 135px;
    display: flex;
    align-items: center;
    justify-content: space-between;
    padding: 32px 16px 8px 0;
}
.map-head h2 { margin: 0; font-size: 58px; font-weight: 600; color: #212529; letter-spacing: -0.5px; }
.chevron { width: 40px; height: 24px; }
.map-head .chevron { margin-top: 13px; }

.map-wrap { position: relative; width: 2190px; height: 1425px; background: #fff; overflow: hidden; }
.map { width: 2190px; height: 1425px; }
.water { fill: #000; }
.flecks { fill: none; stroke: #fff; stroke-width: 3; }
.province { fill: none; stroke: #666; stroke-width: 2.5; }
.states path { stroke: #222; stroke-width: 4; stroke-linejoin: round; }
.coast { fill: none; stroke: #222; stroke-width: 3; }
.s1 { fill: #f1f0f7; }
.s2 { fill: #dadaec; }
.s3 { fill: #b9c9e4; }
.s4 { fill: #9ab9dc; }
.s5 { fill: #75a6d0; }
.s6 { fill: #5b8bc4; }
.s7 { fill: #50729a; }

.zoom-ctl {
    position: absolute;
    left: 30px;
    top: 29px;
    width: 78px;
    border-radius: 10px;
    background: #fff;
    box-shadow: 0 2px 20px rgba(0,0,0,.4);
    overflow: hidden;
}
.zoom-btn {
    display: block;
    width: 78px;
    height: 78px;
    border: 0;
    background: #fff;
    font: 700 54px "Liberation Sans", sans-serif;
    color: #111;
    padding: 0;
}
.zoom-btn + .zoom-btn { border-top: 3px solid #ccc; }

.legend {
    position: absolute;
    left: 1755px;
    top: 30px;
    width: 404px;
    height: 414px;
    padding: 18px 0 0 23px;
    background: rgba(255,255,255,.8);
    border-radius: 14px;
    box-shadow: 0 0 40px rgba(0,0,0,.2);
    font: 42px/54px "Liberation Sans", Arial, sans-serif;
    color: #555;
}
.legend-row { display: flex; height: 54px; }
.legend-row i { width: 54px; height: 54px; flex: none; }
.legend-row span { flex: 1; text-align: center; white-space: nowrap; }
.c7 { background: #6583a8; }
.c6 { background: #6f98ca; }
.c5 { background: #83afd6; }
.c4 { background: #a7c3e0; }
.c3 { background: #c3d0e8; }
.c2 { background: #dfdeee; }
.c1 { background: #f4f2f9; }

.stats {
    width: 1050px;
    margin: 40px 0 0 91px;
    flex: none;
    position: relative;
    border: 3px solid #dfdfdf;
    border-bottom: 0;
    border-radius: 14px 14px 0 0;
    padding-top: 95px;
    display: flex;
    flex-direction: column;
    min-height: 0;
    background: #fff;
}
.stats-chevron { position: absolute; right: 16px; top: 34px; }
.toggle {
    width: 871px;
    height: 114px;
    flex: none;
    margin-left: 85px;
    display: flex;
    border: 3px solid #4358b4;
    border-radius: 57px;
    overflow: hidden;
    font-size: 45px;
    color: #4358b4;
}
.toggle-opt { flex: 1; display: flex; align-items: center; justify-content: center; padding-top: 2px; }
.toggle-opt.on { flex: none; width: 422px; background: #4358b4; color: #fff; }
.stats-body { flex: 1; min-height: 0; position: relative; overflow: hidden; padding-right: 31px; }
.total { height: 232px; text-align: center; color: #212529; }
.total-label { padding-top: 28px; font-size: 42px; line-height: 62px; }
.total-num { font-size: 90px; font-weight: 600; line-height: 122px; }
.state-list { list-style: none; margin: 0; padding: 0; font-size: 47px; color: #212529; }
.state-list li { height: 123px; padding: 28px 0 0 24px; line-height: 66px; border-bottom: 3px solid #dfdfdf; white-space: nowrap; }
.state-list b { font-weight: 400; letter-spacing: -0.5px; }
.state-list span { color: #6c757d; letter-spacing: -1.2px; }
.stats-scroll {
    position: absolute;
    top: 0;
    right: 0;
    bottom: 0;
    width: 31px;
    background: linear-gradient(90deg, #a8a8a8, #e8e8e8 50%, #a8a8a8);
}
.stats-thumb { height: 272px; background: #4358b4; }

/* taskbar */
.taskbar { height: 120px; flex: none; display: flex; background: #1e1e1e; color: #fff; }
.start { width: 145px; flex: none; padding: 36px 0 0 48px; }
.start svg { width: 48px; height: 48px; }
.search {
    width: 1030px;
    flex: none;
    display: flex;
    align-items: center;
    padding-left: 36px;
    background: #f0f0f0;
    border: 3px solid #c0c0c0;
    border-width: 3px 3px 3px 2px;
    color: #333;
    font-size: 43px;
    letter-spacing: -0.6px;
}
.search-icon { width: 48px; height: 48px; margin-right: 36px; flex: none; }
.tb-item { width: 146px; flex: none; display: flex; align-items: center; justify-content: center; position: relative; }
.cortana { width: 145px; }
.cortana svg { width: 48px; height: 48px; }
.taskview { width: 142px; }
.taskview svg { width: 48px; height: 48px; }
.explorer { width: 158px; padding-left: 6px; }
.explorer svg { width: 64px; height: 72px; }
.chrome { width: 144px; background: linear-gradient(90deg, #4d4d4d 133px, #404040 133px); }
.chrome svg { width: 72px; height: 72px; }
.chrome::after, .vscode::after { content: ""; position: absolute; left: 0; right: 0; bottom: 0; height: 6px; background: #76b9ed; }
.vscode::after { left: 13px; right: 13px; }
.spotify { margin-left: 3px; }
.spotify svg, .slack svg { width: 72px; height: 72px; }
.fl svg { width: 72px; height: 76px; }
.vscode svg { width: 72px; height: 72px; }
.vscode { width: 146px; margin-left: 1px; }
.gitkraken svg { width: 72px; height: 84px; }
.slack, .gitkraken { margin-left: 1px; }
.tray { margin-left: auto; display: flex; align-items: center; height: 100%; padding-right: 12px; }
.tray-caret { width: 38px; height: 22px; }
.tray-battery { width: 44px; height: 32px; margin-left: 55px; }
.tray-wifi { width: 38px; height: 38px; margin-left: 58px; }
.tray-volume { width: 48px; height: 42px; margin-left: 50px; }
.tray-pen { width: 50px; height: 50px; margin-left: 59px; }
.clock { width: 170px; margin-left: 48px; text-align: center; font-size: 34px; line-height: 55px; white-space: nowrap; }
.tray-notify { width: 48px; height: 48px; margin-left: 52px; }
.show-desktop { width: 2px; height: 100%; margin-left: 61px; background: #555; }
```
